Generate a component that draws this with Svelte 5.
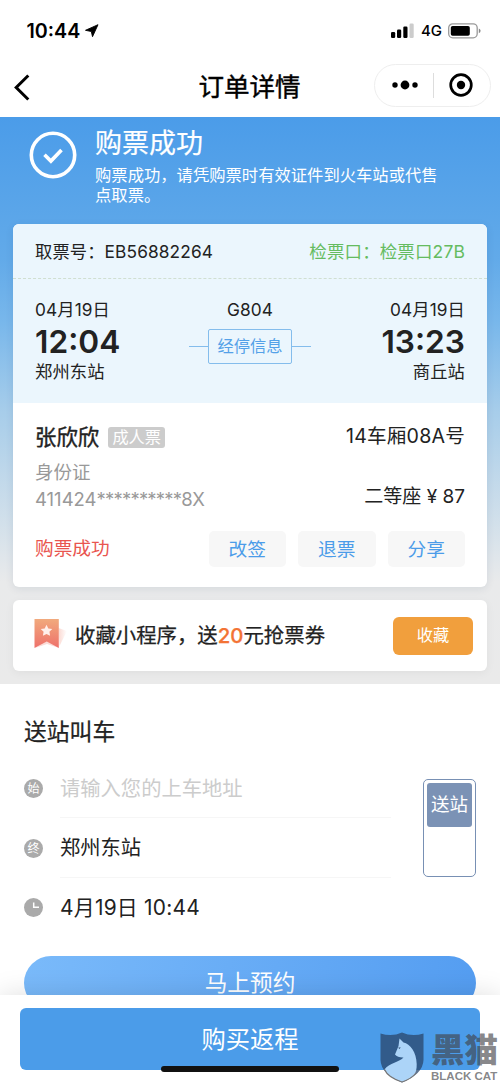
<script>
	const departure = { date: '04月19日', time: '12:04', station: '郑州东站' };
	const arrival = { date: '04月19日', time: '13:23', station: '商丘站' };
	const actions = ['改签', '退票', '分享'];
</script>

<div class="page">
	<header>
		<div class="status">
			<div class="clock">
				<span>10:44</span>
				<svg width="14" height="14" viewBox="0 0 14 14"><path d="M13 .7 7.500 12.700 6.300 7.500 .5 6.300Z" stroke="#000" stroke-width=".9" stroke-linejoin="round" /></svg>
			</div>
			<div class="signal">
				<svg width="24" height="16" viewBox="0 0 24 16">
					<rect x="0" y="9" width="4.2" height="6" rx="1.2" />
					<rect x="6" y="6.5" width="4.2" height="8.5" rx="1.2" />
					<rect x="12.3" y="3.5" width="4.2" height="11.5" rx="1.2" />
					<rect x="18.5" y="0.5" width="4.2" height="14.5" rx="1.2" fill="#ccc" />
				</svg>
				<span>4G</span>
				<svg width="33" height="16" viewBox="0 0 33 16">
					<rect x=".7" y=".8" width="28.5" height="14" rx="4" fill="none" stroke="#999" stroke-width="1.3" />
					<rect x="2.8" y="3" width="19" height="9.8" rx="1.8" />
					<path d="M30.8 5.4Q32.6 6 32.6 7.8T30.8 10.2Z" fill="#888" />
				</svg>
			</div>
		</div>
		<nav>
			<svg class="back" width="16" height="27" viewBox="0 0 16 27"><path d="M14.3 1.5 2.2 13.5l12.1 12" fill="none" stroke="#000" stroke-width="3" /></svg>
			<h1>订单详情</h1>
			<div class="capsule">
				<svg width="26" height="10" viewBox="0 0 26 10"><circle cx="3" cy="5" r="2.7" /><circle cx="13" cy="5" r="4.4" /><circle cx="23" cy="5" r="2.7" /></svg>
				<i></i>
				<svg width="24" height="24" viewBox="0 0 24 24"><circle cx="12" cy="12" r="10.3" fill="none" stroke="#000" stroke-width="2.7" /><circle cx="12" cy="12" r="4.2" /></svg>
			</div>
		</nav>
	</header>

	<section class="hero">
		<div class="result">
			<svg width="48" height="48" viewBox="0 0 48 48" fill="none" stroke="#fff"><circle cx="24" cy="24" r="21.7" stroke-width="3.6" /><path d="m15.5 23.8 6.4 6.3L32.5 19" stroke-width="3.6" /></svg>
			<div>
				<h2>购票成功</h2>
				<p>购票成功，请凭购票时有效证件到火车站或代售<br />点取票。</p>
			</div>
		</div>

		<div class="ticket">
			<div class="pickup">
				<span>取票号：EB56882264</span>
				<span class="gate">检票口：检票口27B</span>
			</div>
			<div class="journey">
				<div class="stop">
					<span>{departure.date}</span>
					<b>{departure.time}</b>
					<span>{departure.station}</span>
				</div>
				<div class="train">
					<span>G804</span>
					<div class="via"><span>经停信息</span></div>
				</div>
				<div class="stop end">
					<span>{arrival.date}</span>
					<b>{arrival.time}</b>
					<span>{arrival.station}</span>
				</div>
			</div>
			<div class="passenger">
				<div class="person">
					<div class="name"><b>张欣欣</b><span class="tag">成人票</span></div>
					<span class="id">身份证</span>
					<span class="id number">411424<span class="mask">**********</span>8X</span>
				</div>
				<div class="seat">
					<span class="place">14车厢08A号</span>
					<span class="price">二等座 ¥ 87</span>
				</div>
			</div>
			<div class="actions">
				<span class="state">购票成功</span>
				{#each actions as action}
					<button>{action}</button>
				{/each}
			</div>
		</div>

		<div class="promo">
			<svg width="36" height="32" viewBox="0 0 36 32">
				<defs>
					<linearGradient id="ribbon" x1="0" y1="0" x2="0" y2="1"><stop offset="0" stop-color="#f1aa7d" /><stop offset="1" stop-color="#ee716b" /></linearGradient>
					<linearGradient id="shade" x1="0" y1="0" x2="1" y2="0"><stop offset="0" stop-color="#fbd9d2" /><stop offset="1" stop-color="#fff" /></linearGradient>
				</defs>
				<path d="M24.5 10 33 13 25.5 28Z" fill="url(#shade)" />
				<path d="m1 30 12-7 12 7-12-4Z" fill="#fbdcd7" />
				<path d="M.5 1h24.3v29l-12-6.5-12.3 6.5Z" fill="url(#ribbon)" />
				<path d="m12.5 6.8 1.8 3.6 4 .6-2.9 2.8.7 4-3.6-1.9-3.6 1.9.7-4L6.700 11l4-.6Z" fill="#fff0eb" />
			</svg>
			<p>收藏小程序，送<em>20</em>元抢票券</p>
			<button>收藏</button>
		</div>
	</section>

	<section class="ride">
		<h3>送站叫车</h3>
		<div class="form">
			<div class="fields">
				<div class="field">
					<i class="dot">始</i>
					<span class="placeholder">请输入您的上车地址</span>
				</div>
				<div class="field">
					<i class="dot">终</i>
					<span>郑州东站</span>
				</div>
				<div class="field">
					<svg width="19" height="19" viewBox="0 0 19 19"><circle cx="9.500" cy="9.500" r="9.500" fill="#aaa" /><path d="M9.700 4.500v4.700H15" fill="none" stroke="#fff" stroke-width="1.500" /></svg>
					<span class="when">4月19日 10:44</span>
				</div>
			</div>
			<div class="switch"><span>送站</span></div>
		</div>
		<button class="book">马上预约</button>
	</section>

	<footer>
		<button>购买返程</button>
		<div class="home"></div>
		<div class="watermark">
			<svg width="44" height="51" viewBox="0 0 44 51">
				<path d="M.5 1.500Q12 5 22 .5 32 5 43.500 1.500V28Q43 42 22 50.500 1 42 .5 28Z" fill="#29466a" fill-opacity=".75" />
				<path d="M18.500 14 19.500 6.500 23.500 10.500C30 12 36.500 20 36.700 32 36.800 37 36 41 33.500 44Q28 48 22 50 8 45 4.500 37.500C9 31 20 30 23.500 25.500 20 25.700 16.500 24.500 15 22.500Z" fill="#acd4f8" />
				<path d="M4.500 37.500Q8 45.500 22 50 32 46.500 36 41" fill="none" stroke="#777" stroke-width="1.200" />
				<path d="m18.300 15.500 2.500 0-1.500 1.500Z" fill="#29466a" />
			</svg>
			<div class="mark">
				<strong>黑猫</strong>
				<span>BLACK CAT</span>
			</div>
		</div>
	</footer>
</div>

<style>
	:global(body) {
		margin: 0;
		background: #fff;
	}
	.page {
		display: flex;
		flex-direction: column;
		width: 500px;
		height: 1083px;
		overflow: hidden;
		position: relative;
		font-family: Inter, 'Noto Sans CJK SC', sans-serif;
		color: #222;
	}
	h1, h2, h3, p {
		margin: 0;
		font-weight: 400;
	}
	svg {
		display: block;
		flex: none;
	}
	span, b {
		white-space: nowrap;
	}
	button {
		border: 0;
		padding: 0;
		font: inherit;
	}
	header {
		height: 117px;
		flex: none;
		color: #000;
	}
	.status {
		display: flex;
		justify-content: space-between;
		align-items: center;
		height: 53px;
		padding: 8px 19px 0 26.500px;
		box-sizing: border-box;
	}
	.clock, .signal {
		display: flex;
		align-items: center;
	}
	.clock {
		gap: 5px;
		font-size: 19.700px;
		font-weight: 600;
	}
	.signal {
		gap: 6px;
		font-size: 15px;
		font-weight: 500;
	}
	nav {
		display: grid;
		grid-template-columns: 1fr auto 1fr;
		align-items: center;
		height: 64px;
		padding: 0 9px 0 14px;
	}
	.back {
		margin-top: 5px;
	}
	h1 {
		margin: 3px 6px 0 0;
		font-size: 25.500px;
		line-height: 36px;
		-webkit-text-stroke: .45px #000;
	}
	.capsule {
		display: flex;
		justify-content: space-between;
		align-items: center;
		justify-self: end;
		box-sizing: border-box;
		width: 117px;
		height: 43px;
		padding: 0 17px;
		border: 1px solid #eee;
		border-radius: 22px;
	}
	.capsule i {
		width: 1px;
		height: 25px;
		background: #ddd;
	}
	.hero {
		flex: none;
		box-sizing: border-box;
		height: 567px;
		padding: 0 13px;
		background: linear-gradient(#4b9ce9 0%, #62aae9 25%, #78b7eb 36%, #a7cdea 52%, #e9eaeb 82%, #eaeaea 100%);
	}
	.result {
		display: flex;
		height: 107px;
		box-sizing: border-box;
		padding: 9px 0 0 16px;
		gap: 18px;
		color: #fff;
	}
	.result svg {
		margin-top: 5px;
	}
	h2 {
		font-size: 27px;
		line-height: 36px;
		-webkit-text-stroke: .2px #fff;
	}
	.result p {
		margin-top: 3px;
		font-size: 16.320px;
		line-height: 20px;
		white-space: nowrap;
	}
	.ticket {
		height: 363px;
		overflow: hidden;
		border-radius: 6px;
		background: #fff;
		box-shadow: 0 2px 8px rgba(0, 40, 80, .09);
	}
	.pickup {
		display: flex;
		justify-content: space-between;
		align-items: center;
		box-sizing: border-box;
		height: 55px;
		padding: 0 22px 2px;
		font-size: 17.300px;
		letter-spacing: .12px;
		background: #ebf6fd;
		border-bottom: 1.500px dashed #d0dfd1;
	}
	.gate {
		font-size: 17.500px;
		color: #65bc60;
	}
	.journey {
		display: grid;
		grid-template-columns: 1fr 122px 1fr;
		box-sizing: border-box;
		height: 124px;
		padding: 18px 22px 0;
		background: #ebf6fd;
		font-size: 17.300px;
		letter-spacing: .1px;
	}
	.stop {
		display: flex;
		flex-direction: column;
		line-height: 26px;
	}
	.stop b {
		padding-top: 1px;
		font-size: 31.700px;
		font-weight: 600;
		line-height: 35px;
		letter-spacing: 0;
	}
	.end {
		align-items: flex-end;
	}
	.train {
		display: flex;
		flex-direction: column;
		align-items: center;
		line-height: 26px;
	}
	.via {
		display: flex;
		align-items: center;
		margin-top: 6px;
	}
	.via::before, .via::after {
		content: '';
		width: 19px;
		height: 1px;
		background: #84bdec;
	}
	.via span {
		box-sizing: border-box;
		width: 84px;
		height: 35px;
		border: 1px solid #84bdec;
		border-radius: 2px;
		font-size: 16.300px;
		line-height: 33px;
		text-align: center;
		letter-spacing: 0;
		color: #54a1e8;
	}
	.passenger {
		display: flex;
		justify-content: space-between;
		box-sizing: border-box;
		height: 128px;
		padding: 19px 22px 0;
	}
	.person {
		display: flex;
		flex-direction: column;
	}
	.name {
		display: flex;
		align-items: center;
		height: 30px;
		gap: 9px;
	}
	.name b {
		padding-bottom: 3px;
		font-size: 21.400px;
		font-weight: 400;
		-webkit-text-stroke: .4px #222;
	}
	.tag {
		box-sizing: border-box;
		width: 57px;
		height: 21px;
		border-radius: 3px;
		background: #ccc;
		color: #fff;
		font-size: 16.200px;
		line-height: 20px;
		text-align: center;
	}
	.id {
		margin-top: 7px;
		font-size: 18.500px;
		line-height: 26px;
		color: #999;
	}
	.number {
		margin-top: 1px;
	}
	.mask {
		letter-spacing: -.8px;
	}
	.seat {
		display: flex;
		flex-direction: column;
		align-items: flex-end;
		font-size: 19px;
		line-height: 28px;
	}
	.place {
		font-size: 19.600px;
		letter-spacing: .2px;
	}
	.price {
		margin-top: 33px;
	}
	.actions {
		display: flex;
		align-items: center;
		gap: 12px;
		padding: 0 22px;
		height: 36px;
	}
	.state {
		margin-right: auto;
		color: #e9554f;
		font-size: 18.700px;
		line-height: 28px;
	}
	.actions button {
		width: 77.500px;
		height: 36px;
		border-radius: 5px;
		background: #f7f7f7;
		color: #4b9ce9;
		font-size: 18.700px;
		line-height: 35px;
	}
	.promo {
		display: flex;
		align-items: center;
		box-sizing: border-box;
		height: 71px;
		margin-top: 13px;
		padding: 0 14px 0 21px;
		border-radius: 6px;
		background: #fff;
		box-shadow: 0 2px 10px rgba(0, 0, 0, .05);
	}
	.promo svg {
		margin-top: -4px;
	}
	.promo p {
		margin: 1px 0 0 5px;
		font-size: 20.400px;
		line-height: 30px;
		white-space: nowrap;
		-webkit-text-stroke: .25px;
	}
	.promo em {
		font-style: normal;
		font-weight: 500;
		color: #f37335;
	}
	.promo button {
		width: 80px;
		height: 38px;
		margin-left: auto;
		border-radius: 6px;
		background: #f19f3d;
		color: #fff;
		font-size: 16.200px;
		line-height: 34px;
		padding-bottom: 2px;
	}
	.ride {
		padding: 31px 24px 0;
	}
	h3 {
		font-size: 22.800px;
		line-height: 34px;
		-webkit-text-stroke: .25px;
	}
	.form {
		display: flex;
		justify-content: space-between;
		margin-top: 10px;
		height: 197px;
	}
	.field {
		display: flex;
		align-items: center;
		gap: 17px;
		height: 59.400px;
		font-size: 20.300px;
	}
	.field span {
		width: 331px;
		height: 58.400px;
		line-height: 59px;
		border-bottom: 1px solid #f6f6f6;
	}
	.field:last-child span {
		border: 0;
	}
	.field .placeholder {
		color: #ccc;
	}
	.field .when {
		font-size: 20.900px;
		letter-spacing: .25px;
	}
	.dot {
		width: 19px;
		height: 19px;
		border-radius: 50%;
		background: #aaa;
		color: #fff;
		font-size: 12px;
		font-style: normal;
		line-height: 19.500px;
		text-align: center;
	}
	.switch {
		box-sizing: border-box;
		width: 53px;
		height: 98px;
		margin-top: 20px;
		padding: 3px;
		border: 1px solid #7890b4;
		border-radius: 5px;
	}
	.switch span {
		display: block;
		height: 44px;
		border-radius: 3px;
		background: #7b92b5;
		color: #fff;
		font-size: 18.500px;
		line-height: 43px;
		text-align: center;
	}
	.book {
		display: block;
		width: 452px;
		height: 54px;
		border-radius: 27px;
		background: linear-gradient(100deg, #7abafa, #549df1);
		color: #fff;
		font-size: 22.700px;
		line-height: 52px;
	}
	footer {
		position: absolute;
		left: 0;
		right: 0;
		bottom: 0;
		box-sizing: border-box;
		height: 88px;
		padding: 13px 20px 0;
		background: #fff;
		box-shadow: 0 0 26px rgba(0, 0, 0, .13);
	}
	footer button {
		display: block;
		width: 460px;
		height: 62px;
		border-radius: 6px;
		background: #4b9ce9;
		color: #fff;
		font-size: 24.300px;
		line-height: 60px;
	}
	.home {
		position: absolute;
		left: 161px;
		bottom: 11px;
		width: 178px;
		height: 6px;
		border-radius: 3px;
		background: #111;
	}
	.watermark {
		position: absolute;
		right: 0;
		bottom: 0;
		display: flex;
		gap: 7px;
		width: 120px;
		height: 51px;
	}
	.mark {
		display: flex;
		flex-direction: column;
		padding-top: 2px;
		color: rgba(65, 65, 70, .65);
	}
	.mark strong {
		height: 37px;
		font-size: 33.500px;
		font-weight: 900;
		line-height: 33px;
		white-space: nowrap;
	}
	.mark span {
		font-family: 'Liberation Sans', sans-serif;
		font-size: 11.500px;
		font-weight: 700;
		line-height: 10px;
	}
</style>
